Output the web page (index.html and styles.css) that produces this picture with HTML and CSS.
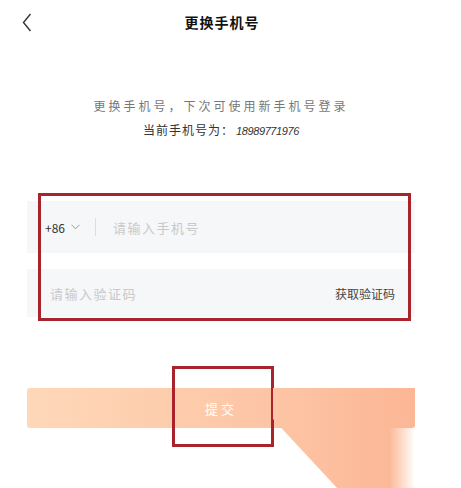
FILE: index.html
```html
<!DOCTYPE html>
<html lang="zh-CN">
<head>
    <meta charset="UTF-8">
    <meta name="viewport" content="width=device-width, initial-scale=1.0">
    <title>更换手机号</title>
    <link rel="stylesheet" href="styles.css">
</head>
<body>
    <header class="top-bar">
        <a class="back" href="#">
            <svg width="10" height="19" viewBox="0 0 10 19"><path d="M8.5 1 L1.5 9.5 L8.5 18" fill="none" stroke="#333" stroke-width="1.4"/></svg>
        </a>
        <h1>更换手机号</h1>
        <span class="spacer"></span>
    </header>

    <!-- Intro text -->
    <div class="intro">
        <p class="tip">更换手机号，下次可使用新手机号登录</p>
        <p class="current">当前手机号为：<span class="num">18989771976</span></p>
    </div>

    <!-- Form -->
    <form class="phone-form">
        <div class="field">
            <span class="code">+86</span>
            <svg class="arrow" width="9" height="6" viewBox="0 0 9 6"><path d="M0.5 0.8 L4.5 4.8 L8.5 0.8" fill="none" stroke="#999" stroke-width="1"/></svg>
            <span class="divider"></span>
            <input type="text" class="phone-input" placeholder="请输入手机号">
        </div>
        <div class="field field-code">
            <input type="text" class="code-input" placeholder="请输入验证码">
            <span class="get-code">获取验证码</span>
        </div>
        <div class="mark mark-form"></div>
    </form>

    <div class="submit-wrap">
        <button type="submit" class="submit">提交</button>
        <div class="mark mark-btn"></div>
        <div class="beam"></div>
    </div>
</body>
</html>
```

FILE: styles.css
```css
html,
body {
    margin: 0;
    padding: 0;
    background: #fff;
    overflow: hidden;
    height: 100%;
}

body {
    font-family: "Noto Sans CJK SC", "Noto Sans", sans-serif;
    color: #333;
}

.top-bar {
    display: flex;
    align-items: center;
    height: 44px;
}

.back {
    width: 40px;
    padding-left: 22px;
    box-sizing: border-box;
    display: flex;
    align-items: center;
    height: 44px;
}

.top-bar h1 {
    flex: 1;
    margin: 0;
    text-align: center;
    font-size: 14px;
    font-weight: bold;
    letter-spacing: 1px;
    color: #111;
}

.spacer {
    width: 57px;
}

.intro {
    margin: 50px 46px 0 27px;
    text-align: center;
}

.intro p {
    margin: 0;
    line-height: 24px;
}

.tip {
    font-size: 12px;
    letter-spacing: 3px;
    color: #777;
}

.current {
    font-size: 12px;
    letter-spacing: 1px;
    color: #333;
}

.num {
    font-family: "Liberation Sans", sans-serif;
    font-style: italic;
    font-size: 11px;
    letter-spacing: -0.4px;
    margin-left: 2px;
}

.phone-form {
    position: relative;
    margin: 58px 46px 0 27px;
    display: flex;
    flex-direction: column;
    gap: 16px;
}

.field {
    display: flex;
    align-items: center;
    height: 52px;
    background: #f6f7f9;
    padding-left: 18px;
}

.field-code {
    height: 48px;
    padding-left: 23px;
    padding-right: 20px;
}

.code {
    font-size: 12px;
    color: #333;
}

.arrow {
    margin-left: 6px;
}

.divider {
    width: 1px;
    height: 18px;
    background: #ddd;
    margin-left: 15px;
}

.field input {
    flex: 1;
    min-width: 0;
    border: none;
    outline: none;
    background: transparent;
    padding: 0;
    font-family: inherit;
    font-size: 13px;
    letter-spacing: 1.5px;
    color: #333;
}

.phone-input {
    margin-left: 17px;
}

.field input::placeholder {
    color: #c9c9c9;
}

.get-code {
    font-size: 12px;
    color: #444;
}

.mark {
    position: absolute;
    border: 3px solid #a8232a;
    box-sizing: border-box;
}

.mark-form {
    left: 11px;
    top: -8px;
    width: 373px;
    height: 128px;
}

.submit-wrap {
    position: relative;
    margin: 71px 46px 0 27px;
}

.submit {
    display: block;
    width: 100%;
    height: 40px;
    border: none;
    border-radius: 3px;
    background: linear-gradient(to right, #fed8b9, #fdc7a7 55%, #fbb897);
    color: #fff;
    font-family: inherit;
    font-size: 13px;
    letter-spacing: 3px;
}

.mark-btn {
    left: 145px;
    top: -22px;
    width: 102px;
    height: 81px;
}

.beam {
    position: absolute;
    left: 246px;
    top: 0;
    width: 142px;
    height: 101px;
    background: linear-gradient(to right, #fdc5a5, #fbb695);
    clip-path: polygon(0 0, 100% 0, 100% 100%, 65px 100%, 0 31px);
    -webkit-mask-image: linear-gradient(to bottom, #000 30%, transparent 30%), linear-gradient(to right, #000 82%, transparent 100%);
    mask-image: linear-gradient(to bottom, #000 30%, transparent 30%), linear-gradient(to right, #000 82%, transparent 100%);
}
```
